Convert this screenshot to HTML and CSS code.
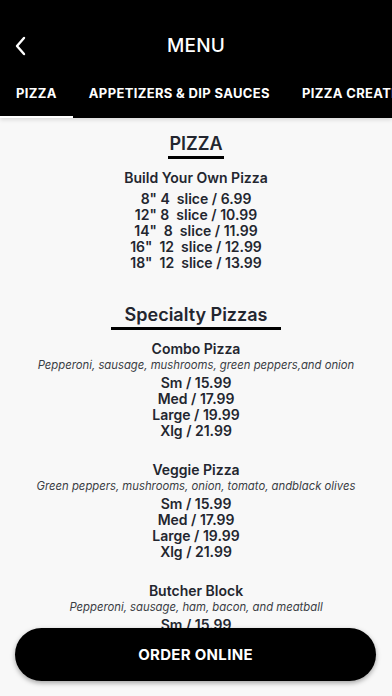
FILE: index.html
```html
<!DOCTYPE html>
<html>
<head>
<meta charset="utf-8">
<link rel="stylesheet" href="styles.css">
</head>
<body>
<div class="app">
  <header class="header">
    <div class="titlebar">
      <svg class="back" width="14" height="20" viewBox="0 0 14 20"><path d="M10 2 L3 10 L10 18" fill="none" stroke="#fff" stroke-width="2.4" stroke-linecap="round" stroke-linejoin="round"/></svg>
      <div class="title">MENU</div>
    </div>
    <nav class="tabs">
      <div class="tab active">PIZZA</div>
      <div class="tab">APPETIZERS &amp; DIP SAUCES</div>
      <div class="tab">PIZZA CREATIONS</div>
    </nav>
  </header>
  <main class="content">
    <section class="sec first">
      <h2 class="heading"><span class="ul narrow">PIZZA</span></h2>
      <div class="item">
        <div class="name">Build Your Own Pizza</div>
        <div class="prices pre">
          <div class="line">8" 4  slice / 6.99</div>
          <div class="line">12" 8  slice / 10.99</div>
          <div class="line">14"  8  slice / 11.99</div>
          <div class="line">16"  12  slice / 12.99</div>
          <div class="line">18"  12  slice / 13.99</div>
        </div>
      </div>
    </section>
    <section class="sec">
      <h2 class="heading"><span class="ul wide">Specialty Pizzas</span></h2>
      <div class="item">
        <div class="name">Combo Pizza</div>
        <div class="desc">Pepperoni, sausage, mushrooms, green peppers,and onion</div>
        <div class="prices">
          <div>Sm / 15.99</div>
          <div>Med / 17.99</div>
          <div>Large / 19.99</div>
          <div>Xlg / 21.99</div>
        </div>
      </div>
      <div class="item">
        <div class="name">Veggie Pizza</div>
        <div class="desc">Green peppers, mushrooms, onion, tomato, andblack olives</div>
        <div class="prices">
          <div>Sm / 15.99</div>
          <div>Med / 17.99</div>
          <div>Large / 19.99</div>
          <div>Xlg / 21.99</div>
        </div>
      </div>
      <div class="item">
        <div class="name">Butcher Block</div>
        <div class="desc">Pepperoni, sausage, ham, bacon, and meatball</div>
        <div class="prices">
          <div>Sm / 15.99</div>
          <div>Med / 17.99</div>
          <div>Large / 19.99</div>
          <div>Xlg / 21.99</div>
        </div>
      </div>
    </section>
  </main>
  <button class="order">ORDER ONLINE</button>
</div>
</body>
</html>
```
FILE: styles.css
```css
* { box-sizing: border-box; }
html, body { margin: 0; padding: 0; }
body {
  width: 392px;
  height: 696px;
  overflow: hidden;
  background: #f8f8f8;
  font-family: Inter, "Noto Sans", sans-serif;
  color: #23262f;
}
.app {
  position: relative;
  width: 392px;
  height: 696px;
  overflow: hidden;
  display: flex;
  flex-direction: column;
}
.header {
  background: #000;
  color: #fff;
  height: 118px;
  flex: none;
  display: flex;
  flex-direction: column;
  box-shadow: 0 2px 4px rgba(0,0,0,0.12);
  position: relative;
  z-index: 1;
}
.titlebar {
  height: 72px;
  padding-top: 19px;
  display: flex;
  align-items: flex-start;
  justify-content: center;
  position: relative;
}
.back {
  position: absolute;
  left: 14px;
  top: 36px;
}
.title {
  font-size: 19px;
  font-weight: 500;
  line-height: 54px;
  letter-spacing: 0.2px;
}
.tabs {
  display: flex;
  height: 46px;
  white-space: nowrap;
  overflow: hidden;
}
.tab {
  padding: 0 16px;
  font-size: 13px;
  font-weight: 700;
  letter-spacing: 0.35px;
  line-height: 42px;
  border-bottom: 2px solid transparent;
  flex: none;
}
.tab.active { border-bottom-color: #fff; }
.content {
  flex: 1;
  overflow: hidden;
  text-align: center;
}
.sec.first { margin-top: 15px; }
.sec { margin-top: 33px; }
.heading {
  margin: 0;
  font-size: 18px;
  font-weight: 600;
  line-height: 22px;
}
.ul {
  display: inline-block;
  border-bottom: 3px solid #000;
  padding-bottom: 1px;
}
.ul.narrow { padding-left: 1px; padding-right: 1px; }
.ul.wide { padding-left: 14px; padding-right: 14px; }
.item { margin-top: 10px; }
.item + .item { margin-top: 22px; }
.name {
  font-size: 14px;
  font-weight: 600;
  line-height: 18px;
}
.desc {
  font-size: 11.3px;
  font-style: italic;
  line-height: 14px;
  color: #3a3d44;
}
.prices {
  margin-top: 3px;
  font-size: 14px;
  font-weight: 600;
  line-height: 16px;
}
.prices.pre { margin-top: 4px; }
.line { white-space: pre; }
.order {
  position: absolute;
  left: 15px;
  right: 16px;
  top: 628px;
  height: 53px;
  border: none;
  border-radius: 27px;
  background: #000;
  color: #fff;
  font-family: Inter, "Noto Sans", sans-serif;
  font-size: 15px;
  font-weight: 700;
  letter-spacing: 0.3px;
  box-shadow: 0 2px 5px rgba(0,0,0,0.35);
}
```
